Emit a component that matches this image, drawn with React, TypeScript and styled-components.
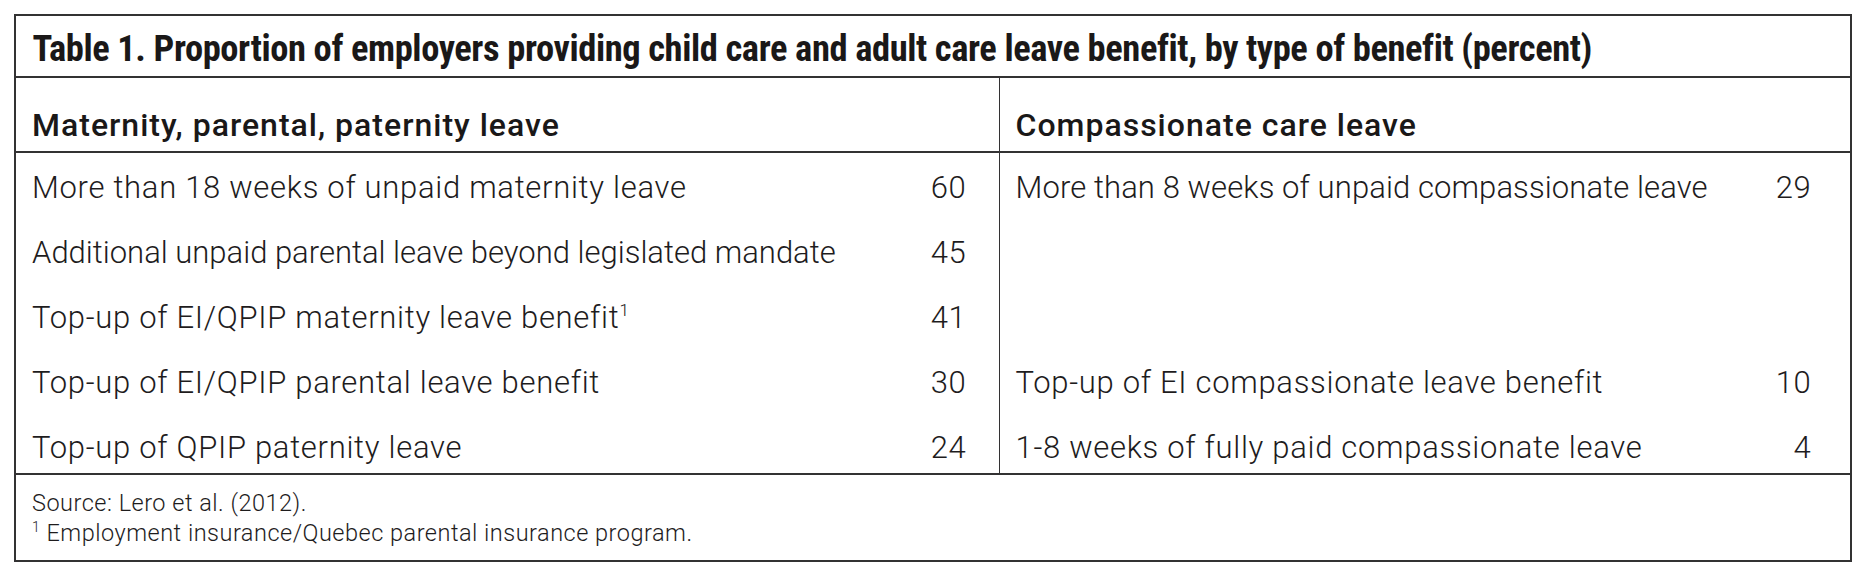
import React from 'react';
import styled, { createGlobalStyle } from 'styled-components';

const GlobalStyle = createGlobalStyle`
  body {
    margin: 0;
    background: #ffffff;
    font-family: Roboto, 'Liberation Sans', sans-serif;
    color: #1e1c1d;
  }
`;

interface Benefit {
  label: string;
  value?: number;
  note?: string;
  // long lines are set a little tighter, as in the print original
  tracking?: number;
}

const parentalLeave: Benefit[] = [
  { label: 'More than 18 weeks of unpaid maternity leave', value: 60 },
  { label: 'Additional unpaid parental leave beyond legislated mandate', value: 45, tracking: 0 },
  { label: 'Top-up of EI/QPIP maternity leave benefit', value: 41, note: '1' },
  { label: 'Top-up of EI/QPIP parental leave benefit', value: 30 },
  { label: 'Top-up of QPIP paternity leave', value: 24 },
];

const compassionateLeave: Benefit[] = [
  { label: 'More than 8 weeks of unpaid compassionate leave', value: 29, tracking: 0.1 },
  { label: '' },
  { label: '' },
  { label: 'Top-up of EI compassionate leave benefit', value: 10 },
  { label: '1-8 weeks of fully paid compassionate leave', value: 4 },
];

const BenefitColumn: React.FC<{ title: string; rows: Benefit[]; divided?: boolean; valueInset: number }> = ({
  title,
  rows,
  divided,
  valueInset,
}) => (
  <Column $divided={divided}>
    <ColumnHead>{title}</ColumnHead>
    <Body>
      {rows.map((row, i) => (
        <Row key={i} $inset={valueInset}>
          <Label $tracking={row.tracking ?? 0.7}>
            {row.label}
            {row.note && <Sup>{row.note}</Sup>}
          </Label>
          <Value>{row.value}</Value>
        </Row>
      ))}
    </Body>
  </Column>
);

export default function App() {
  return (
    <>
      <GlobalStyle />
      <Table>
        <Caption>
          Table 1. Proportion of employers providing child care and adult care leave benefit, by type of benefit (percent)
        </Caption>
        <Columns>
          <BenefitColumn title="Maternity, parental, paternity leave" rows={parentalLeave} valueInset={32} />
          <BenefitColumn title="Compassionate care leave" rows={compassionateLeave} divided valueInset={38.5} />
        </Columns>
        <Notes>
          <Note>Source: Lero et al. (2012).</Note>
          <Note>
            <NoteMark>1</NoteMark> Employment insurance/Quebec parental insurance program.
          </Note>
        </Notes>
      </Table>
    </>
  );
}

const Table = styled.div`
  box-sizing: border-box;
  margin: 14px 0 0 14px;
  width: 1838px;
  border: 2px solid #333233;
`;

const Caption = styled.div`
  box-sizing: border-box;
  height: 62px;
  padding: 15px 16.5px 0;
  border-bottom: 2px solid #333233;
  font-family: Roboto, 'Liberation Sans', sans-serif;
  font-weight: 700;
  font-stretch: 75%;
  font-size: 36.5px;
  letter-spacing: -0.4px;
  line-height: 36px;
  color: #1a1818;
  white-space: nowrap;
`;

const Columns = styled.div`
  display: grid;
  grid-template-columns: 982.5px 1fr;
  border-bottom: 2px solid #333233;
`;

const Column = styled.div<{ $divided?: boolean }>`
  box-sizing: border-box;
  display: flex;
  flex-direction: column;
  border-left: ${(p) => (p.$divided ? '1.5px solid #333233' : 'none')};
`;

const ColumnHead = styled.div`
  box-sizing: border-box;
  height: 75px;
  padding: 31px 15px 0 16px;
  border-bottom: 2px solid #333233;
  font-weight: 500;
  font-size: 32px;
  letter-spacing: 1px;
  line-height: 32px;
  color: #1a1818;
  white-space: nowrap;
`;

const Body = styled.div`
  box-sizing: border-box;
  height: 320px;
  padding-top: 18.6px;
  display: flex;
  flex-direction: column;
  gap: 34px;
`;

const Row = styled.div<{ $inset: number }>`
  display: flex;
  justify-content: space-between;
  height: 31px;
  padding: 0 ${(p) => p.$inset}px 0 16px;
  font-weight: 300;
  font-size: 31px;
  line-height: 31px;
  white-space: nowrap;
`;

const Label = styled.span<{ $tracking: number }>`
  letter-spacing: ${(p) => p.$tracking}px;
`;

const Value = styled.span`
  letter-spacing: 0.7px;
`;

const Sup = styled.sup`
  font-size: 17px;
  line-height: 0;
  vertical-align: 12px;
  letter-spacing: 0;
`;

const Notes = styled.div`
  box-sizing: border-box;
  height: 85px;
  padding: 12.7px 16px 0;
`;

const Note = styled.div`
  font-weight: 300;
  font-size: 23.5px;
  letter-spacing: 0.5px;
  line-height: 30px;
  white-space: nowrap;
`;

const NoteMark = styled.sup`
  font-size: 14px;
  line-height: 0;
  vertical-align: 9px;
`;
